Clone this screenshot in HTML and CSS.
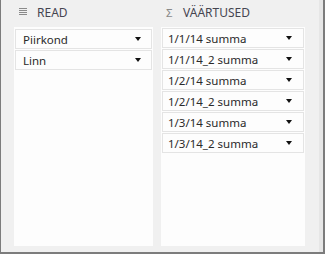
FILE: index.html
```html
<!DOCTYPE html>
<html>
<head>
<meta charset="utf-8">
<link rel="stylesheet" href="styles.css">
</head>
<body>
<div class="pane">
  <div class="cols">
    <section class="col col-rows">
      <header class="head">
        <svg class="icon" width="8" height="8" viewBox="0 0 8 8"><g fill="#8a8a8a"><rect x="0" y="0" width="8" height="1"/><rect x="0" y="2" width="8" height="1"/><rect x="0" y="4" width="8" height="1"/><rect x="0" y="6" width="8" height="1"/></g></svg>
        <span class="title">READ</span>
      </header>
      <ul class="list">
        <li class="item"><span>Piirkond</span><i class="arrow"></i></li>
        <li class="item"><span>Linn</span><i class="arrow"></i></li>
      </ul>
    </section>
    <section class="col col-values">
      <header class="head">
        <span class="sigma">Σ</span>
        <span class="title">VÄÄRTUSED</span>
      </header>
      <ul class="list">
        <li class="item"><span>1/1/14 summa</span><i class="arrow"></i></li>
        <li class="item"><span>1/1/14_2 summa</span><i class="arrow"></i></li>
        <li class="item"><span>1/2/14 summa</span><i class="arrow"></i></li>
        <li class="item"><span>1/2/14_2 summa</span><i class="arrow"></i></li>
        <li class="item"><span>1/3/14 summa</span><i class="arrow"></i></li>
        <li class="item"><span>1/3/14_2 summa</span><i class="arrow"></i></li>
      </ul>
    </section>
  </div>
  <div class="strip"></div>
</div>
</body>
</html>
```
FILE: styles.css
```css
* { box-sizing: border-box; }
html, body { margin: 0; padding: 0; }
body {
  font-family: "Noto Sans", "Open Sans", sans-serif;
  background: #f0f0f0;
}
.pane {
  width: 325px;
  height: 254px;
  background: #f0f0f0;
  border-left: 1px solid #7c7c7c;
  border-right: 2px solid #7c7c7c;
  border-bottom: 2px solid #7c7c7c;
  display: flex;
}
.cols {
  display: grid;
  grid-template-columns: 139px 144px;
  column-gap: 8px;
  padding-left: 13px;
  padding-bottom: 6px;
  flex: 1;
}
.col {
  display: flex;
  flex-direction: column;
}
.head {
  height: 27px;
  display: flex;
  align-items: center;
  padding-left: 5px;
  padding-bottom: 3px;
  color: #454550;
  font-size: 12px;
}
.icon { display: block; margin-right: 10px; }
.sigma {
  font-size: 11.5px;
  color: #8a8a8a;
  width: 17px;
}
.list {
  list-style: none;
  margin: 0;
  padding: 1px;
  background: #fdfdfd;
  flex: 1;
  display: flex;
  flex-direction: column;
  gap: 1px;
}
.col-rows .list { padding-top: 2px; }
.item {
  height: 20px;
  border: 1px solid #e4e4e4;
  display: flex;
  align-items: center;
  justify-content: space-between;
  padding: 0 10px 0 7px;
  font-size: 11.5px;
  color: #2a2a2a;
}
.col-values .item { padding-left: 5px; padding-right: 11px; }
.arrow {
  width: 0;
  height: 0;
  border-left: 3.5px solid transparent;
  border-right: 3.5px solid transparent;
  border-top: 4px solid #111;
}
.strip {
  width: 4px;
  background: #e6e6e6;
}
```
